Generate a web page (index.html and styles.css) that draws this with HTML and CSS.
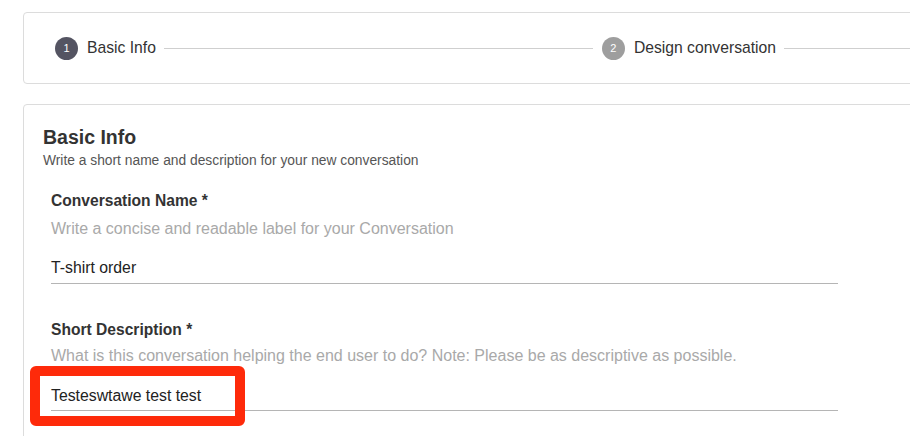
FILE: index.html
```html
<!DOCTYPE html>
<html lang="en">
<head>
<meta charset="utf-8">
<title>Basic Info</title>
<link rel="stylesheet" href="styles.css">
</head>
<body>
<div class="page">
  <div class="card stepper">
    <div class="step">
      <span class="step-num active">1</span>
      <span class="step-label">Basic Info</span>
    </div>
    <div class="step-line"></div>
    <div class="step">
      <span class="step-num">2</span>
      <span class="step-label">Design conversation</span>
    </div>
    <div class="step-line"></div>
  </div>

  <div class="card form-card">
    <h2 class="form-title">Basic Info</h2>
    <p class="form-sub">Write a short name and description for your new conversation</p>

    <div class="fields">
      <div class="field">
        <div class="field-label">Conversation Name *</div>
        <div class="field-hint">Write a concise and readable label for your Conversation</div>
        <div class="field-input">T-shirt order</div>
      </div>
      <div class="field field-second">
        <div class="field-label">Short Description *</div>
        <div class="field-hint hint-tight">What is this conversation helping the end user to do? Note: Please be as descriptive as possible.</div>
        <div class="field-input">Testeswtawe test test</div>
      </div>
    </div>
  </div>

  <div class="highlight"></div>
</div>
</body>
</html>
```

FILE: styles.css
```css
html, body {
  margin: 0;
  padding: 0;
  background: #ffffff;
  overflow: hidden;
}

body {
  font-family: "Liberation Sans", Arial, Helvetica, sans-serif;
  color: #333333;
}

.page {
  position: relative;
  padding: 12px 0 0 23px;
  width: 1300px;
}

.card {
  border: 1px solid #dcdcdc;
  border-radius: 4px;
  background: #ffffff;
  box-sizing: border-box;
}

.stepper {
  height: 72px;
  width: 1220px;
  display: flex;
  align-items: center;
  padding: 0 20px 0 31px;
}

.step {
  display: flex;
  align-items: center;
  gap: 9px;
  flex: none;
}

.step-num {
  width: 23px;
  height: 23px;
  border-radius: 50%;
  background: #9e9e9e;
  color: #ffffff;
  font-size: 11px;
  display: flex;
  align-items: center;
  justify-content: center;
}

.step-num.active {
  background: #545462;
}

.step-label {
  font-size: 15.7px;
  color: #333333;
  line-height: 20px;
}

.step-line {
  flex: 1;
  height: 1px;
  background: #cfcfcf;
  margin: 0 9px 0 8px;
}

.form-card {
  margin-top: 20px;
  width: 1240px;
  height: 400px;
  padding: 20px 0 0 19px;
}

.form-title {
  margin: 0;
  font-size: 19.5px;
  line-height: 24px;
  font-weight: 700;
  color: #333333;
}

.form-sub {
  margin: 3px 0 0;
  font-size: 13.8px;
  line-height: 18px;
  color: #555555;
}

.fields {
  width: 787px;
  padding-left: 8px;
  margin-top: 21px;
}

.field-label {
  font-size: 15.6px;
  line-height: 20px;
  font-weight: 700;
  color: #333333;
}

.field-hint {
  margin-top: 8px;
  font-size: 16px;
  line-height: 20px;
  color: #a9a9a9;
}

.hint-tight {
  margin-top: 6px;
}

.field-input {
  margin-top: 19px;
  font-size: 15.8px;
  line-height: 20px;
  color: #222222;
  padding-bottom: 5px;
  border-bottom: 1px solid #b5b5b5;
}

.field-second {
  margin-top: 36px;
}

.field-second .field-input {
  margin-top: 20px;
  padding-bottom: 4px;
}

.highlight {
  position: absolute;
  left: 30px;
  top: 366px;
  width: 215px;
  height: 60px;
  box-sizing: border-box;
  border: 10px solid #fe2a0a;
  border-radius: 6px;
}
```
